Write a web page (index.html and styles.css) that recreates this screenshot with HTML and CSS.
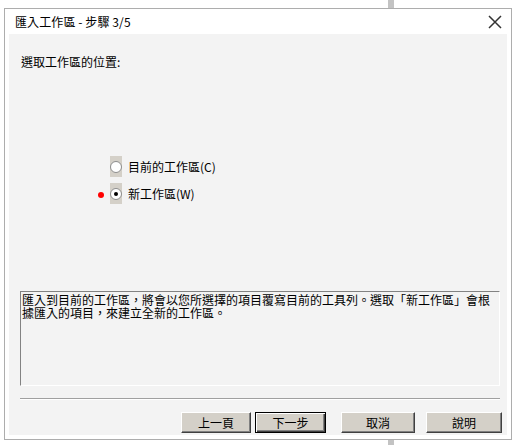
FILE: index.html
```html
<!DOCTYPE html>
<html lang="zh-Hant">
<head>
<meta charset="utf-8">
<title>匯入工作區</title>
<link rel="stylesheet" href="styles.css">
</head>
<body>
<div class="screen">
  <div class="backbar"></div>
  <div class="dialog">
    <div class="titlebar">
      <span class="title">匯入工作區 - 步驟 3/5</span>
      <svg class="close" width="14" height="14" viewBox="0 0 14 14"><path d="M1 1 L13 13 M13 1 L1 13" stroke="#333" stroke-width="1.5" fill="none"/></svg>
    </div>
    <div class="panel">
      <div class="heading">選取工作區的位置:</div>
      <div class="options">
        <div class="row">
          <span class="marker hidden"></span>
          <span class="radiobox"><span class="radio"></span></span>
          <span class="label">目前的工作區(C)</span>
        </div>
        <div class="row">
          <span class="marker"></span>
          <span class="radiobox"><span class="radio checked"></span></span>
          <span class="label">新工作區(W)</span>
        </div>
      </div>
      <div class="desc">匯入到目前的工作區，將會以您所選擇的項目覆寫目前的工具列。選取「新工作區」會根據匯入的項目，來建立全新的工作區。</div>
      <div class="separator"></div>
      <div class="buttons">
        <button class="btn w70">上一頁</button>
        <button class="btn default w71">下一步</button>
        <button class="btn w74">取消</button>
        <button class="btn w76">說明</button>
      </div>
    </div>
  </div>
</div>
</body>
</html>
```

FILE: styles.css
```css
* { box-sizing: border-box; }
html, body { margin: 0; padding: 0; background: #fff; }
body { font-family: "Noto Sans CJK TC", "Noto Sans", sans-serif; font-size: 12px; color: #000; }
.screen { position: relative; width: 516px; height: 445px; overflow: hidden; padding: 8px 0 0 4px; }
.backbar { position: absolute; left: 388px; top: 0; width: 6px; height: 445px; background: #c3c3c3; }
.dialog {
  position: relative; z-index: 1;
  width: 508px; height: 432px;
  border: 1px solid #adadad; background: #fff;
  padding: 0 4px 4px 4px;
  display: flex; flex-direction: column;
}
.titlebar { height: 25px; display: flex; align-items: center; justify-content: space-between; padding-left: 6px; padding-right: 5px; }
.title { font-size: 12px; line-height: 16px; letter-spacing: 0.1px; }
.close { display: block; margin-top: 0; }
.panel { flex: 1; background: #f3f3f3; display: flex; flex-direction: column; }
.heading { margin-top: 20px; padding-left: 12px; line-height: 16px; }
.options { margin-top: 86px; display: flex; flex-direction: column; gap: 6px; }
.row { display: flex; align-items: center; height: 21px; padding-left: 89px; }
.marker { width: 6px; height: 6px; border-radius: 50%; background: #f00; margin-top: 2px; }
.marker.hidden { visibility: hidden; }
.radiobox { width: 12px; height: 21px; background: #d4d0c8; margin-left: 6px; display: flex; align-items: center; justify-content: center; }
.radio { width: 12px; height: 12px; border-radius: 50%; border: 1px solid #8d8d8d; background: #fff; display: flex; align-items: center; justify-content: center; }
.radio.checked::after { content: ""; width: 4px; height: 4px; border-radius: 50%; background: #000; }
.label { margin-left: 6px; line-height: 16px; }
.desc {
  margin: 87px 0 0 11px; width: 480px; height: 95px;
  border-top: 1px solid #828282; border-left: 1px solid #828282;
  border-right: 1px solid #fff; border-bottom: 1px solid #fff;
  padding: 1px 0 0 1px; line-height: 13px; letter-spacing: 0;
  line-break: anywhere;
}
.separator { margin: 12px 0 0 11px; width: 480px; height: 2px; border-top: 1px solid #a0a0a0; border-bottom: 1px solid #fff; }
.buttons { margin-top: 12px; padding-left: 172px; display: flex; }
.btn {
  height: 21px; padding: 0; font: inherit; font-size: 12px; line-height: 16px; color: #000;
  background: #d4d0c8;
  border-top: 1px solid #fff; border-left: 1px solid #fff;
  border-right: 1px solid #404040; border-bottom: 1px solid #404040;
  box-shadow: inset -1px -1px 0 #808080;
}
.btn.default { border: 1px solid #000; box-shadow: inset 1px 1px 0 #fff, inset -1px -1px 0 #404040, inset -2px -2px 0 #808080; }
.w70 { width: 70px; }
.w71 { width: 71px; margin-left: 4px; }
.w74 { width: 74px; margin-left: 15px; }
.w76 { width: 76px; margin-left: 11px; }
```
